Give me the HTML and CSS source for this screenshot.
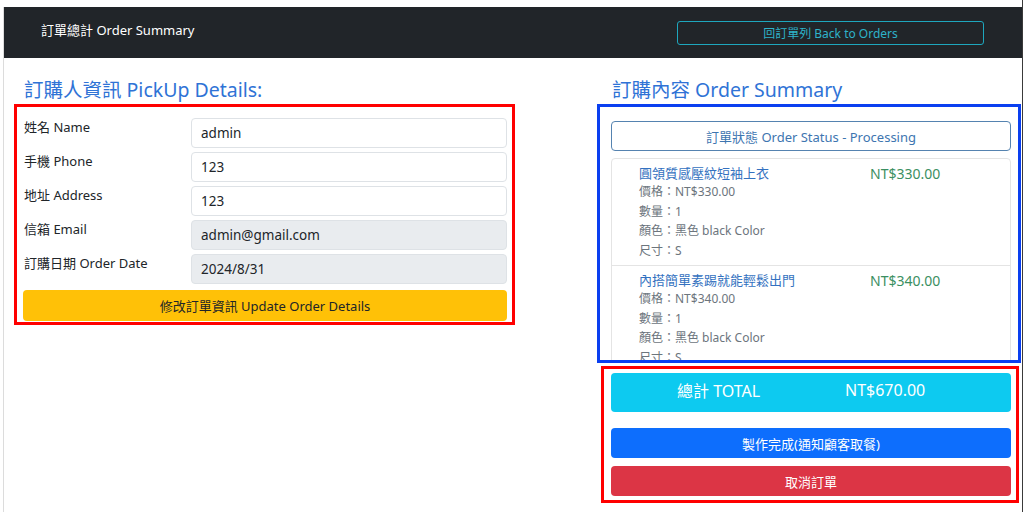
FILE: index.html
```html
<!DOCTYPE html>
<html lang="zh-Hant">
<head>
    <meta charset="UTF-8">
    <title>訂單總計 Order Summary</title>
    <link rel="stylesheet" href="styles.css">
</head>
<body>
<div class="window">
    <div class="screen">
        <nav class="navbar">
            <span class="brand">訂單總計 Order Summary</span>
            <button class="btn-back">回訂單列 Back to Orders</button>
        </nav>
        <div class="content">
            <div class="col-left">
                <h2>訂購人資訊 PickUp Details:</h2>
                <div class="mark-red form-box">
                    <div class="form-row">
                        <label>姓名 Name</label>
                        <input type="text" value="admin">
                    </div>
                    <div class="form-row">
                        <label>手機 Phone</label>
                        <input type="text" value="123">
                    </div>
                    <div class="form-row">
                        <label>地址 Address</label>
                        <input type="text" value="123">
                    </div>
                    <div class="form-row">
                        <label>信箱 Email</label>
                        <input type="text" value="admin@gmail.com" readonly class="readonly">
                    </div>
                    <div class="form-row">
                        <label>訂購日期 Order Date</label>
                        <input type="text" value="2024/8/31" readonly class="readonly">
                    </div>
                    <button class="btn btn-warning">修改訂單資訊 Update Order Details</button>
                </div>
            </div>
            <div class="col-right">
                <h2>訂購內容 Order Summary</h2>
                <div class="mark-blue order-box">
                    <button class="btn-status">訂單狀態 Order Status - Processing</button>
                    <ul class="list-group">
                        <li class="list-item">
                            <div class="item-info">
                                <div class="item-name">圓領質感壓紋短袖上衣</div>
                                <div class="item-detail">價格：NT$330.00</div>
                                <div class="item-detail">數量：1</div>
                                <div class="item-detail">顏色：黑色 black Color</div>
                                <div class="item-detail">尺寸：S</div>
                            </div>
                            <div class="item-price">NT$330.00</div>
                        </li>
                        <li class="list-item">
                            <div class="item-info">
                                <div class="item-name">內搭簡單素踢就能輕鬆出門</div>
                                <div class="item-detail">價格：NT$340.00</div>
                                <div class="item-detail">數量：1</div>
                                <div class="item-detail">顏色：黑色 black Color</div>
                                <div class="item-detail">尺寸：S</div>
                            </div>
                            <div class="item-price">NT$340.00</div>
                        </li>
                    </ul>
                </div>
                <div class="mark-red total-box">
                    <div class="total-bar">
                        <span>總計 TOTAL</span>
                        <span>NT$670.00</span>
                    </div>
                    <button class="btn btn-primary">製作完成(通知顧客取餐)</button>
                    <button class="btn btn-danger">取消訂單</button>
                </div>
            </div>
        </div>
    </div>
</div>
</body>
</html>
```

FILE: styles.css
```css
* { box-sizing: border-box; }
body {
    margin: 0;
    background: #fff;
    font-family: "Noto Sans", "Noto Sans CJK TC", sans-serif;
    color: #212529;
}
.window {
    margin-left: 3px;
    width: 1020px;
    height: 512px;
    padding-top: 7px;
    border-right: 1px solid #3a3a3a;
    overflow: hidden;
}
.screen {
    height: 100%;
    border-left: 1px solid #dcdcdc;
}
.navbar {
    display: flex;
    justify-content: space-between;
    align-items: flex-start;
    height: 51px;
    padding: 13px 38px 0 37px;
    background: #212529;
}
.brand {
    color: #fff;
    font-size: 13px;
    line-height: 20px;
}
.btn-back {
    width: 307px;
    height: 24px;
    margin-top: 1px;
    padding: 0;
    background: transparent;
    border: 1px solid #1ea7be;
    border-radius: 3px;
    color: #2eb3c9;
    font-family: inherit;
    font-size: 12px;
}
.content {
    display: flex;
    gap: 82px;
    padding: 20px 0 0 10px;
}
h2 {
    margin: 0 0 2px;
    font-size: 19.5px;
    font-weight: 400;
    line-height: 24px;
    color: #2f73d6;
}
.col-left {
    width: 501px;
}
.col-left h2 {
    padding-left: 10px;
}
.col-right {
    width: 424px;
}
.col-right h2 {
    padding-left: 15px;
}
.mark-red {
    border: 3px solid #f00;
}
.mark-blue {
    border: 3px solid #0a3ff0;
}
.form-box {
    display: flex;
    flex-direction: column;
    gap: 4px;
    padding: 11px 5px 1px 6px;
}
.form-row {
    display: flex;
    align-items: flex-start;
}
.form-row label {
    width: 168px;
    padding-left: 1px;
    font-size: 13px;
    line-height: 20px;
    margin-top: -1px;
}
.form-row input {
    flex: 1;
    height: 30px;
    padding: 0 9px;
    border: 1px solid #dee2e6;
    border-radius: 4px;
    background: #fff;
    font-family: inherit;
    font-size: 13.5px;
    color: #212529;
}
.form-row input.readonly {
    background: #e9ecef;
}
.btn {
    width: 100%;
    height: 30px;
    padding: 0;
    border: none;
    border-radius: 4px;
    font-family: inherit;
    font-size: 13px;
    color: #fff;
}
.btn-warning {
    height: 31px;
    margin-top: 2px;
    background: #ffc107;
    color: #212529;
}
.btn-primary {
    background: #0d6efd;
}
.btn-danger {
    margin-top: 8px;
    background: #dc3545;
}
.order-box {
    height: 259px;
    padding: 14px 7px 0 11px;
    overflow: hidden;
}
.btn-status {
    width: 100%;
    height: 30px;
    padding: 0;
    background: #fff;
    border: 1px solid #5583b0;
    border-radius: 4px;
    color: #3d75b0;
    font-family: inherit;
    font-size: 13px;
}
.list-group {
    list-style: none;
    margin: 7px 0 0;
    padding: 0;
    border: 1px solid #e4e4e4;
    border-radius: 4px;
}
.list-item {
    display: flex;
    padding: 5px 0 5px 27px;
    border-bottom: 1px solid #e4e4e4;
}
.item-info {
    width: 231px;
}
.item-name {
    font-size: 13px;
    line-height: 18px;
    color: #3371c0;
}
.item-detail {
    font-size: 12px;
    line-height: 19.5px;
    color: #6c757d;
}
.item-price {
    padding-top: 1px;
    font-size: 14px;
    line-height: 18px;
    color: #3b8f62;
}
.total-box {
    margin: 3px 2px 0 4px;
    padding: 4px 5px 4px 7px;
}
.total-bar {
    display: grid;
    grid-template-columns: 168px auto;
    align-items: center;
    height: 39px;
    margin-bottom: 16px;
    padding: 0 0 5px 66px;
    background: #0dcaf0;
    border-radius: 4px;
    color: #fff;
    font-size: 16px;
}
```
